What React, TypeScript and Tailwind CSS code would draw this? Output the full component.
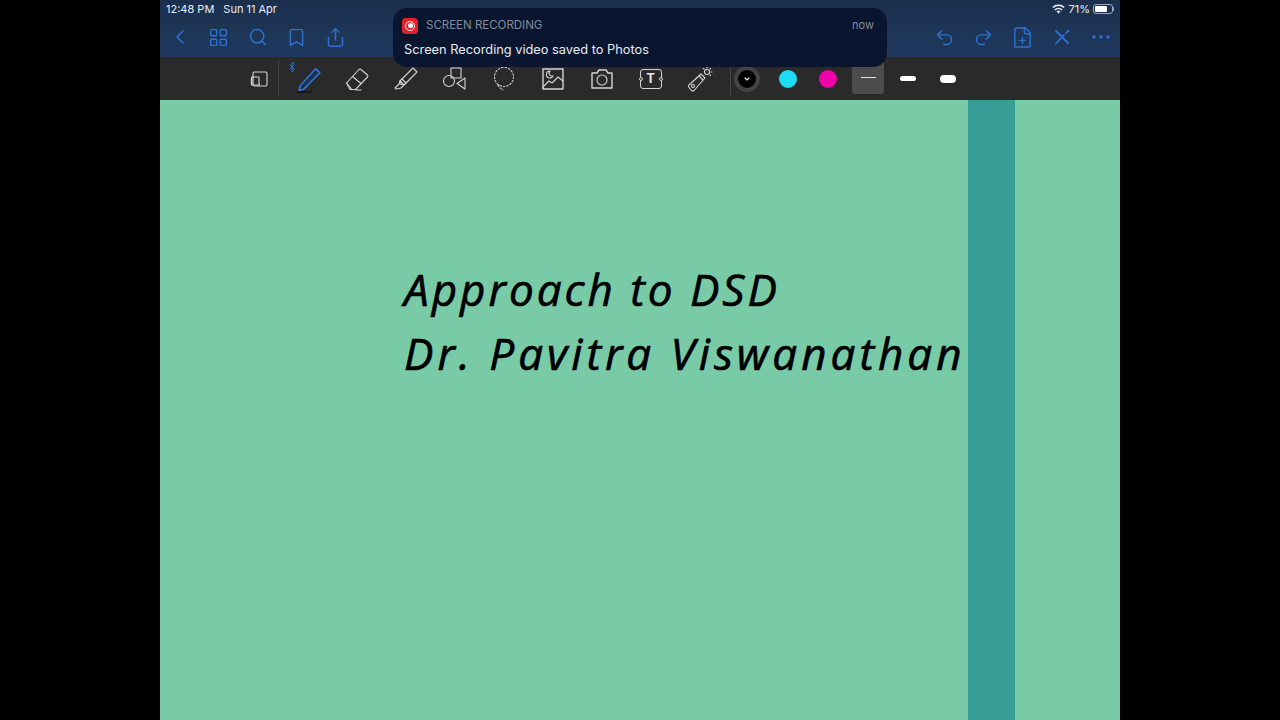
import { Bookmark, ChevronLeft, LayoutGrid, Search, Share, Undo2, Redo2, FilePlus, Bluetooth } from 'lucide-react'
import type { ReactNode } from 'react'

const UI = { fontFamily: 'Inter, "Liberation Sans", sans-serif' }

function Tool({ children }: { children: ReactNode }) {
  return <div className="flex h-full w-[49px] items-center justify-center">{children}</div>
}

function Glyph({ children }: { children: ReactNode }) {
  return (
    <svg width="26" height="26" viewBox="0 0 26 26" fill="none" stroke="#d4d4d4" strokeWidth="1.1" strokeLinejoin="round" strokeLinecap="round">
      {children}
    </svg>
  )
}

function NavButton({ children }: { children: ReactNode }) {
  return <div className="flex w-[39px] items-center justify-center text-[#2d72cf]">{children}</div>
}

export default function App() {
  return (
    <div className="flex h-[720px] w-[1280px] justify-center overflow-hidden bg-black" style={UI}>
      <div className="relative flex w-[960px] flex-col">
        <header className="h-[57px] bg-gradient-to-b from-[#1b2f4d] to-[#1f3a5e]">
          <div className="flex h-[17px] items-center justify-between px-[6px] pt-[1px] text-[11px] text-[#e8edf3]">
            <div className="flex gap-[9px]">
              <span>12:48 PM</span>
              <span>Sun 11 Apr</span>
            </div>
            <div className="flex items-center gap-[3px]">
              <svg width="13" height="10" viewBox="0 0 13 10" fill="#f1f5f9">
                <path d="M6.5 9.6 4.6 7.5a2.8 2.8 0 0 1 3.8 0zM3.6 6.4 2.5 5.2a5.9 5.9 0 0 1 8 0L9.4 6.4a4.3 4.3 0 0 0-5.8 0zM1.5 4.1.3 2.9a9 9 0 0 1 12.4 0l-1.2 1.2a7.3 7.3 0 0 0-10 0z" />
              </svg>
              <span>71%</span>
              <div className="flex items-center">
                <div className="h-[10px] w-[20px] rounded-[3px] border border-[#9aa5b4] p-px">
                  <div className="h-full w-[75%] rounded-[1px] bg-white" />
                </div>
                <div className="h-[4px] w-px bg-[#9aa5b4]" />
              </div>
            </div>
          </div>
          <div className="flex h-[40px] items-center justify-between">
            <div className="flex">
              <NavButton><ChevronLeft size={24} strokeWidth={1.7} /></NavButton>
              <NavButton><LayoutGrid size={21} strokeWidth={1.6} /></NavButton>
              <NavButton><Search size={20} strokeWidth={1.8} /></NavButton>
              <NavButton><Bookmark size={21} strokeWidth={1.7} /></NavButton>
              <NavButton><Share size={21} strokeWidth={1.7} /></NavButton>
            </div>
            <div className="flex">
              <NavButton><Undo2 size={21} strokeWidth={1.7} /></NavButton>
              <NavButton><Redo2 size={21} strokeWidth={1.7} /></NavButton>
              <NavButton><FilePlus size={23} strokeWidth={1.5} /></NavButton>
              <NavButton>
                <svg width="20" height="20" viewBox="0 0 20 20" fill="none" stroke="currentColor" strokeWidth="1.8" strokeLinecap="round">
                  <path d="M4 4l12 12M16.500 3.500 14 6M12 8l-8 8.500" />
                </svg>
              </NavButton>
              <NavButton>
                <svg width="18" height="4" viewBox="0 0 18 4" fill="currentColor">
                  <circle cx="2" cy="2" r="1.7" /><circle cx="9" cy="2" r="1.7" /><circle cx="16" cy="2" r="1.7" />
                </svg>
              </NavButton>
            </div>
          </div>
        </header>

        <div className="flex h-[43px] items-center bg-[#2a2a2a] pl-[80px]">
          <div className="flex h-full w-[38px] items-center justify-center">
            <Glyph>
              <rect x="7" y="6" width="14" height="14" rx="1.500" />
              <path d="M7 11H5.500v8h8v-1" /><path d="M7 11h6v7" /><path d="M5 14h2M5 17h2" />
            </Glyph>
          </div>
          <div className="h-[36px] w-px bg-[#444]" />
          <div className="ml-[4px] flex h-full">
            <Tool>
              <div className="relative">
                <Bluetooth size={12} strokeWidth={2} className="absolute -left-[8px] -top-[4px] text-[#2d72cf]" />
                <svg width="28" height="28" viewBox="0 0 26 26" fill="none" strokeLinejoin="round" strokeLinecap="round">
                  <path d="M6 19 20 3.500 24 7 9.500 22 4.500 24z" stroke="#2d72cf" strokeWidth="1.600" fill="#1f2f47" />
                  <path d="M3 25h13" stroke="#111" strokeWidth="1.400" />
                </svg>
              </div>
            </Tool>
            <Tool>
              <Glyph>
                <path d="M2.500 17 15 3.500a1.500 1.500 0 0 1 2 0l6.500 5.500a1.500 1.500 0 0 1 0 2L11.500 23.500H6z" />
                <path d="M8.500 10.500l8.500 7" /><path d="M2.500 17l5.500 6.500" /><path d="M12 24h5" />
              </Glyph>
            </Tool>
            <Tool>
              <Glyph>
                <path d="M7 15 20 2l4 4L11 19l-4-1z" /><path d="M7 15l4 4-3 3-5 1-1-1 4-4z" /><path d="M9 13l4 4" />
              </Glyph>
            </Tool>
            <Tool>
              <Glyph>
                <rect x="9" y="2" width="10" height="10" /><circle cx="7" cy="15" r="5.500" /><path d="M23 12v11l-8-5.500z" />
              </Glyph>
            </Tool>
            <Tool>
              <Glyph>
                <circle cx="13" cy="11" r="9.500" strokeDasharray="1.500 2" /><path d="M7 19c1 3 4 4 5 5" strokeDasharray="1.500 2" />
              </Glyph>
            </Tool>
            <Tool>
              <Glyph>
                <rect x="3" y="3" width="20" height="20" strokeWidth="1.400" />
                <path d="M3 21l6-6 3 2 6-6 5 4" /><path d="M10 5a3.500 3.500 0 1 0 3 5 3 3 0 0 1-3-5z" />
              </Glyph>
            </Tool>
            <Tool>
              <Glyph>
                <path d="M3 7h5l2-3h7l2 3h4v15H3z" strokeWidth="1.400" /><circle cx="13" cy="14" r="5" />
              </Glyph>
            </Tool>
            <Tool>
              <div className="relative flex h-[20px] w-[22px] items-center justify-center rounded-[3px] border border-[#d4d4d4]">
                <span className="text-[13px] font-bold leading-none text-[#e5e5e5]">T</span>
                <span className="absolute -left-[2px] top-[7px] h-[4px] w-[4px] rounded-full border border-[#d4d4d4] bg-[#2a2a2a]" />
                <span className="absolute -right-[2px] top-[7px] h-[4px] w-[4px] rounded-full border border-[#d4d4d4] bg-[#2a2a2a]" />
              </div>
            </Tool>
            <Tool>
              <Glyph>
                <path d="M2 19 14 8l4 4L7 24.500a2 2 0 0 1-2.500 0l-2.500-3a2 2 0 0 1 0-2.500z" />
                <circle cx="6" cy="20" r="1.500" /><path d="M12 10l4 4" />
                <circle cx="20" cy="6" r="2.500" /><path d="M20 1v1M25 6h-1M16.500 2.500l.7.7M23.500 2.500l-.7.7M23.500 9.500l-.7-.7" />
              </Glyph>
            </Tool>
          </div>
          <div className="ml-[6px] h-[36px] w-px bg-[#444]" />
          <div className="ml-[3px] flex h-[26px] w-[26px] items-center justify-center rounded-full border-[4px] border-[#444] bg-black">
            <svg width="6" height="4" viewBox="0 0 6 4" fill="none" stroke="#fff" strokeWidth="1.200"><path d="M.7.7 3 3 5.300.7" /></svg>
          </div>
          <div className="ml-[19px] h-[18px] w-[18px] rounded-full bg-[#1bdcf2]" />
          <div className="ml-[22px] h-[18px] w-[18px] rounded-full bg-[#f000a8]" />
          <div className="ml-[15px] mt-[-4px] flex h-[34px] w-[32px] items-center justify-center rounded-[3px] bg-[#4c4c4c] pt-[2px]">
            <div className="h-[1.500px] w-[15px] bg-[#e5e5e5]" />
          </div>
          <div className="ml-[16px] h-[5px] w-[16px] rounded-full bg-white" />
          <div className="ml-[24px] h-[8px] w-[16px] rounded-full bg-white" />
        </div>

        <main className="flex flex-1 bg-[#79cba8]">
          <div className="flex-1 pl-[244px] pt-[157px] text-black">
            <p className="text-[44px] italic leading-[64px] [-webkit-text-stroke:0.7px_black]" style={{ fontFamily: '"Open Sans", sans-serif' }}>
              <span className="tracking-[3px]">Approach to DSD</span>
              <br />
              <span className="tracking-[4px]">Dr. Pavitra Viswanathan</span>
            </p>
          </div>
          <div className="w-[47px] bg-[#369e96]" />
          <div className="w-[105px]" />
        </main>

        <aside className="absolute left-[233px] top-[8px] h-[59px] w-[494px] rounded-[14px] bg-[#0a1630] py-[9px] pl-[9px] pr-[11px]">
          <div className="flex items-center">
            <div className="flex h-[16px] w-[16px] items-center justify-center rounded-[4px] bg-[#e5202e]">
              <div className="flex h-[10px] w-[10px] items-center justify-center rounded-full border border-white">
                <div className="h-[5px] w-[5px] rounded-full bg-white" />
              </div>
            </div>
            <span className="ml-[8px] text-[11.500px] text-[#828b9b]">SCREEN RECORDING</span>
            <span className="ml-auto pr-[2px] text-[11px] text-[#828b9b]">now</span>
          </div>
          <p className="ml-[2px] mt-[7px] text-[12.800px] leading-[18px] text-[#e8ebf0]">Screen Recording video saved to Photos</p>
        </aside>
      </div>
    </div>
  )
}
